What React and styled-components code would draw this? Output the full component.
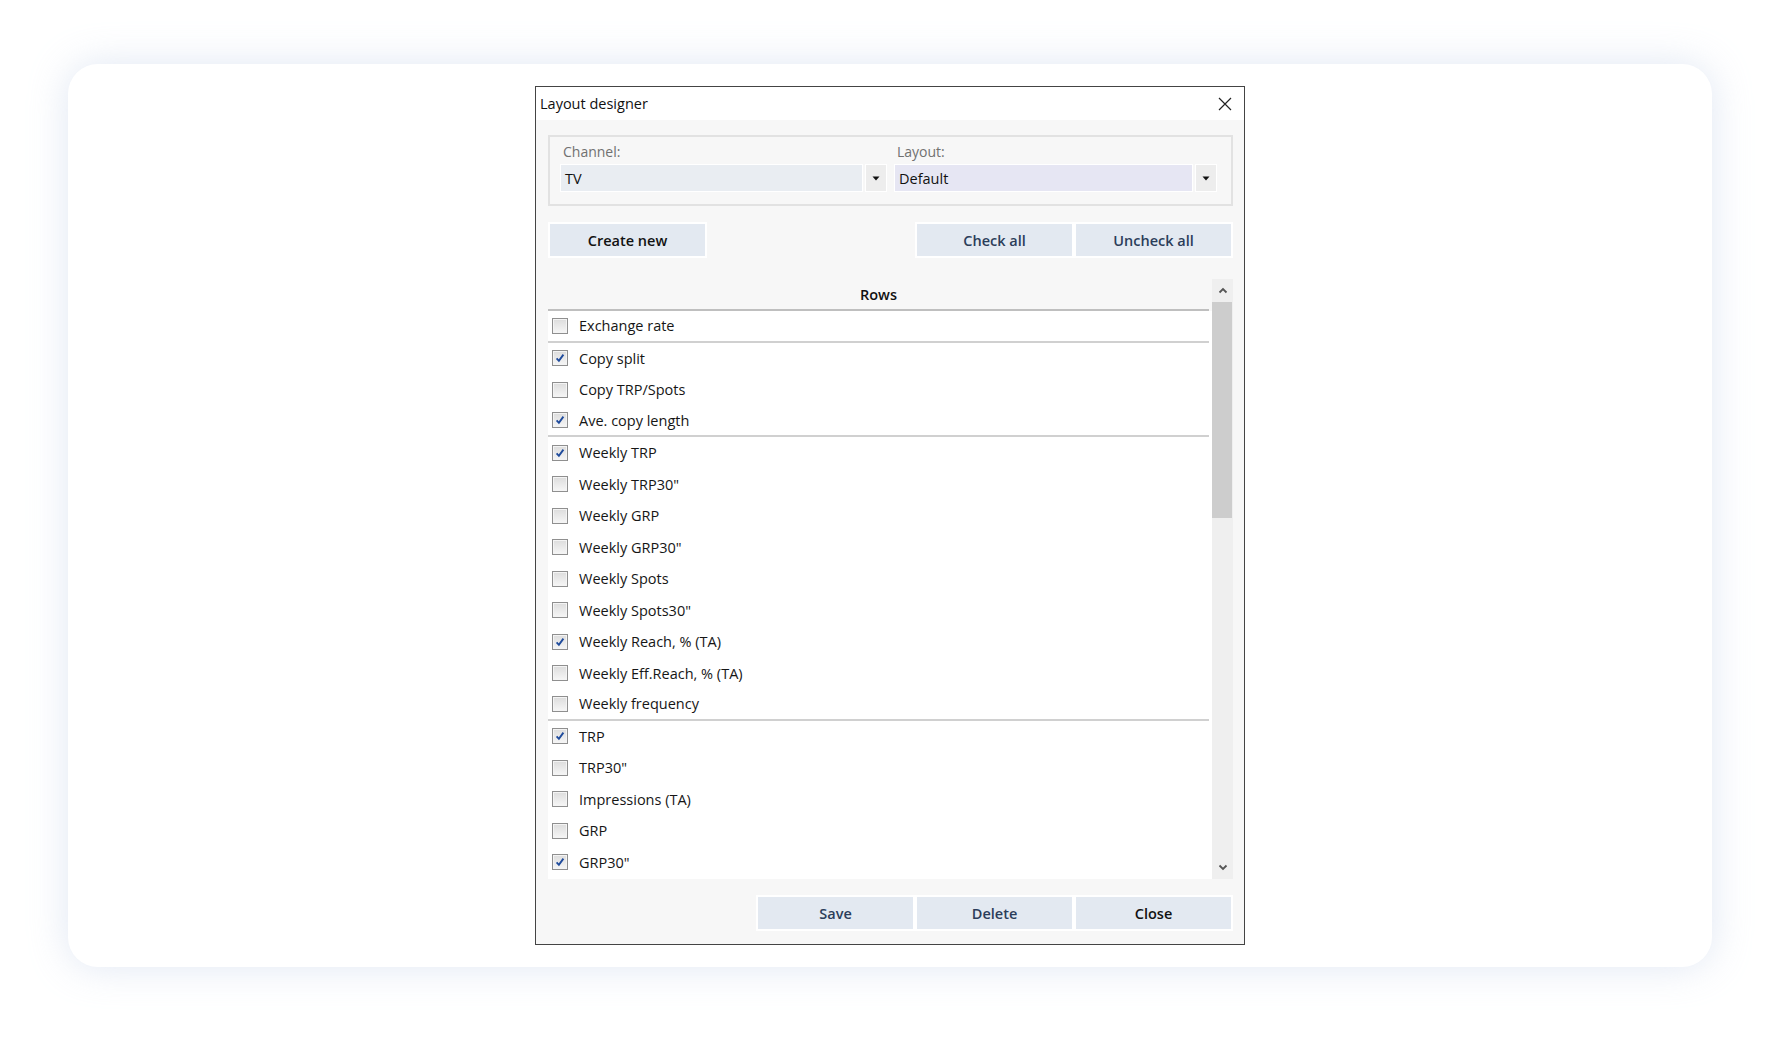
import React from 'react'
import styled, { createGlobalStyle } from 'styled-components'

const GlobalStyle = createGlobalStyle`
  html, body {
    margin: 0;
    padding: 0;
    background: #ffffff;
  }
  body {
    font-family: 'Open Sans', 'Noto Sans', 'Liberation Sans', sans-serif;
    color: #1a1a1a;
  }
  * {
    box-sizing: border-box;
  }
`

const Page = styled.div`
  width: 1780px;
  height: 1040px;
  padding: 64px 68px 0 68px;
`

const Card = styled.div`
  height: 903px;
  border-radius: 30px;
  background: #ffffff;
  box-shadow: 0 0 38px rgba(186, 202, 228, 0.45);
  display: flex;
  justify-content: center;
  padding-top: 22px;
`

const Dialog = styled.div`
  width: 710px;
  height: 859px;
  border: 1px solid #444;
  background: #f7f7f7;
  display: flex;
  flex-direction: column;
`

const TitleBar = styled.div`
  height: 33px;
  flex: none;
  background: #ffffff;
  display: flex;
  align-items: center;
  justify-content: space-between;
  padding: 0 11px 0 4px;
  font-size: 14.5px;
  color: #111;
`

const CloseX = styled.button`
  width: 16px;
  height: 16px;
  padding: 0;
  border: none;
  background: none;
  display: flex;
  align-items: center;
  justify-content: center;
`

const Body = styled.div`
  flex: 1;
  display: flex;
  flex-direction: column;
  padding: 15px 11px 0 12px;
`

const GroupBox = styled.div`
  height: 71px;
  border: 2px solid #e2e2e2;
  padding: 5px 14px 0 10px;
  display: grid;
  grid-template-columns: 327px 1fr;
  column-gap: 7px;
`

const FieldGroup = styled.div`
  display: flex;
  flex-direction: column;
  gap: 3px;
`

const FieldLabel = styled.div`
  font-size: 14px;
  line-height: 19px;
  color: #717171;
  padding-left: 3px;
`

const Combo = styled.div`
  display: flex;
  height: 28px;
  gap: 2px;
`

const ComboField = styled.div`
  flex: 1;
  background: ${p => p.$tint};
  border: 1px solid #ffffff;
  font-size: 14.5px;
  color: #111;
  display: flex;
  align-items: center;
  padding-left: 4px;
`

const ComboArrow = styled.div`
  width: 22px;
  background: #ededed;
  border: 1px solid #ffffff;
  display: flex;
  align-items: center;
  justify-content: center;
`

const ButtonRow = styled.div`
  margin-top: 16px;
  display: flex;
  justify-content: ${p => p.$justify || 'space-between'};
`

const ButtonGroup = styled.div`
  display: flex;
`

const Button = styled.button`
  width: 159px;
  height: 36px;
  border: 2px solid #ffffff;
  background: #e3e9f1;
  font-family: inherit;
  font-size: 14.5px;
  font-weight: 600;
  color: ${p => (p.$strong ? '#121212' : '#2b3d5a')};
  padding: 0;
`

const ListBox = styled.div`
  margin-top: 21px;
  height: 600px;
  display: grid;
  grid-template-columns: 1fr 21px;
`

const ListContent = styled.div`
  display: flex;
  flex-direction: column;
  overflow: hidden;
`

const ListHeader = styled.div`
  height: 32px;
  flex: none;
  margin-right: 3px;
  border-bottom: 2px solid #bfbfbf;
  display: flex;
  align-items: center;
  justify-content: center;
  font-size: 14.5px;
  font-weight: 600;
  color: #111;
`

const Rows = styled.div`
  background: #ffffff;
  flex: 1;
  overflow: hidden;
`

const Row = styled.label`
  height: 31.5px;
  display: flex;
  align-items: center;
  gap: 11px;
  margin-right: 3px;
  padding-left: 4px;
  font-size: 14.5px;
  color: #161616;
  border-bottom: ${p => (p.$divider ? '2px solid #d0d0d0' : 'none')};
`

const Box = styled.span`
  width: 16px;
  height: 16px;
  flex: none;
  border: 1px solid #8f8f8f;
  background: linear-gradient(#dcdcdc, #f6f6f6);
  box-shadow: inset 0 0 0 1px #f4f4f4;
  display: flex;
  align-items: center;
  justify-content: center;
`

const Scrollbar = styled.div`
  background: #efefef;
  display: flex;
  flex-direction: column;
`

const ScrollArrow = styled.div`
  height: 23px;
  flex: none;
  display: flex;
  align-items: center;
  justify-content: center;
`

const Thumb = styled.div`
  height: 216px;
  flex: none;
  margin-right: 1px;
  background: #cdcdcd;
`

const Track = styled.div`
  flex: 1;
`

const Footer = styled(ButtonRow)`
  margin-top: 16px;
`

const rows = [
  { name: 'Exchange rate', checked: false, divider: true },
  { name: 'Copy split', checked: true },
  { name: 'Copy TRP/Spots', checked: false },
  { name: 'Ave. copy length', checked: true, divider: true },
  { name: 'Weekly TRP', checked: true },
  { name: 'Weekly TRP30"', checked: false },
  { name: 'Weekly GRP', checked: false },
  { name: 'Weekly GRP30"', checked: false },
  { name: 'Weekly Spots', checked: false },
  { name: 'Weekly Spots30"', checked: false },
  { name: 'Weekly Reach, % (TA)', checked: true },
  { name: 'Weekly Eff.Reach, % (TA)', checked: false },
  { name: 'Weekly frequency', checked: false, divider: true },
  { name: 'TRP', checked: true },
  { name: 'TRP30"', checked: false },
  { name: 'Impressions (TA)', checked: false },
  { name: 'GRP', checked: false },
  { name: 'GRP30"', checked: true },
]

const Triangle = () => (
  <svg width="8" height="5" viewBox="0 0 8 5">
    <path d="M0.5 0.5 H7.5 L4 4.5 Z" fill="#111" />
  </svg>
)

const Chevron = ({ up }) => (
  <svg width="10" height="7" viewBox="0 0 10 7">
    <path
      d={up ? 'M1.5 5.5 L5 2 L8.5 5.5' : 'M1.5 1.5 L5 5 L8.5 1.5'}
      fill="none"
      stroke="#555"
      strokeWidth="1.8"
    />
  </svg>
)

const Check = () => (
  <svg width="10" height="10" viewBox="0 0 10 10">
    <path
      d="M1.6 5.4 L3.9 7.8 L8.4 1.6"
      fill="none"
      stroke="#1f4b9c"
      strokeWidth="1.9"
    />
  </svg>
)

const App = () => (
  <Page>
    <GlobalStyle />
    <Card>
      <Dialog>
        <TitleBar>
          <span>Layout designer</span>
          <CloseX aria-label="Close">
            <svg width="14" height="14" viewBox="0 0 14 14">
              <path d="M1 1 L13 13 M13 1 L1 13" stroke="#222" strokeWidth="1.2" />
            </svg>
          </CloseX>
        </TitleBar>
        <Body>
          <GroupBox>
            <FieldGroup>
              <FieldLabel>Channel:</FieldLabel>
              <Combo>
                <ComboField $tint="#e9edf2">TV</ComboField>
                <ComboArrow>
                  <Triangle />
                </ComboArrow>
              </Combo>
            </FieldGroup>
            <FieldGroup>
              <FieldLabel>Layout:</FieldLabel>
              <Combo>
                <ComboField $tint="#e6e6f3">Default</ComboField>
                <ComboArrow>
                  <Triangle />
                </ComboArrow>
              </Combo>
            </FieldGroup>
          </GroupBox>

          <ButtonRow>
            <Button $strong>Create new</Button>
            <ButtonGroup>
              <Button>Check all</Button>
              <Button>Uncheck all</Button>
            </ButtonGroup>
          </ButtonRow>

          <ListBox>
            <ListContent>
              <ListHeader>Rows</ListHeader>
              <Rows>
                {rows.map(row => (
                  <Row key={row.name} $divider={row.divider}>
                    <Box>{row.checked && <Check />}</Box>
                    {row.name}
                  </Row>
                ))}
              </Rows>
            </ListContent>
            <Scrollbar>
              <ScrollArrow>
                <Chevron up />
              </ScrollArrow>
              <Thumb />
              <Track />
              <ScrollArrow>
                <Chevron />
              </ScrollArrow>
            </Scrollbar>
          </ListBox>

          <Footer $justify="flex-end">
            <ButtonGroup>
              <Button>Save</Button>
              <Button>Delete</Button>
              <Button $strong>Close</Button>
            </ButtonGroup>
          </Footer>
        </Body>
      </Dialog>
    </Card>
  </Page>
)

export default App
